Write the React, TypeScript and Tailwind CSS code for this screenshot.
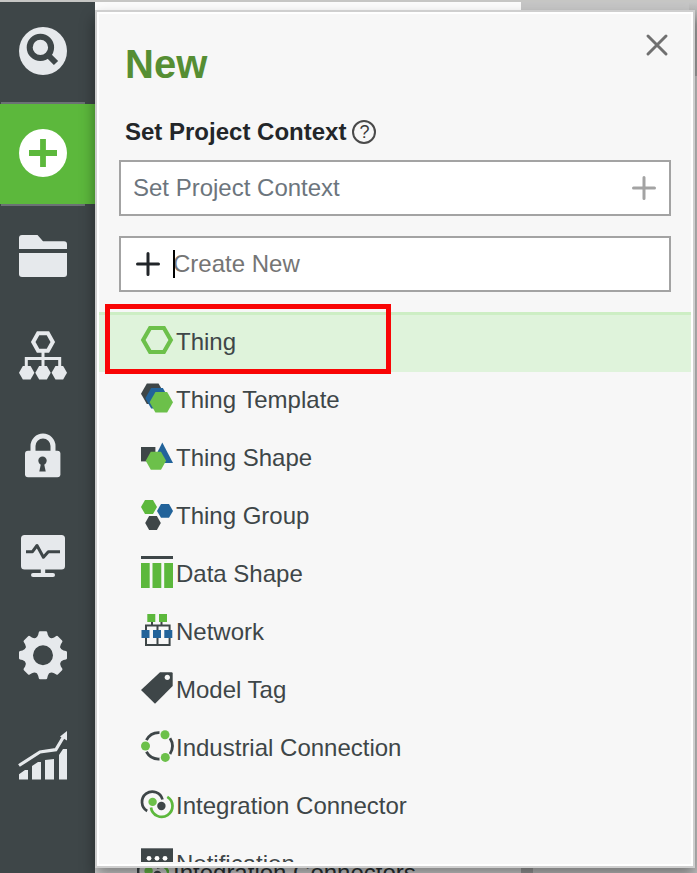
import type { ReactNode } from 'react';

const hex = (x: number, y: number, w: number, h: number) =>
  `${x + w * 0.25},${y} ${x + w * 0.75},${y} ${x + w},${y + h / 2} ${x + w * 0.75},${y + h} ${x + w * 0.25},${y + h} ${x},${y + h / 2}`;

const GREEN = '#5cb83c';
const LIME = '#6cc04a';
const BLUE = '#22639a';
const DARK = '#3e4648';

const NAV: { label: string; icon: ReactNode; active?: boolean }[] = [
  {
    label: 'Search',
    icon: (
      <g transform="translate(0 -1)">
        <circle cx="24" cy="24" r="24" />
        <circle cx="21.4" cy="20.4" r="10.7" fill="none" stroke={DARK} strokeWidth="6" />
        <path d="M28.500 27.500 37 36" stroke={DARK} strokeWidth="6" />
      </g>
    ),
  },
  {
    label: 'New',
    active: true,
    icon: (
      <g transform="translate(0 -1)">
        <circle cx="24" cy="24" r="24" fill="#fff" />
        <path d="M24 10v28M10 24h28" stroke={GREEN} strokeWidth="5.8" />
      </g>
    ),
  },
  {
    label: 'Browse',
    icon: (
      <>
        <path d="M0 17V6a3 3 0 0 1 3-3h15.5L24 9.2h21a3 3 0 0 1 3 3V17z" />
        <path d="M0 21h48v21a3 3 0 0 1-3 3H3a3 3 0 0 1-3-3z" />
      </>
    ),
  },
  {
    label: 'Relationships',
    icon: (
      <>
        <polygon points={hex(14.2, 1.2, 19.6, 17.6)} fill="none" stroke="#e6e9ec" strokeWidth="4" />
        <path d="M24 20v15M7.3 35v-8.4h33.4V35" fill="none" stroke="#e6e9ec" strokeWidth="3" />
        <polygon points={hex(0, 34, 15.4, 13.4)} />
        <polygon points={hex(16.3, 34, 15.4, 13.4)} />
        <polygon points={hex(32.6, 34, 15.4, 13.4)} />
      </>
    ),
  },
  {
    label: 'Security',
    icon: (
      <>
        <path d="M14 21v-7a10 10 0 0 1 20 0v7" fill="none" stroke="#e6e9ec" strokeWidth="5" />
        <rect x="6" y="18.7" width="35.4" height="26.6" rx="3" />
        <circle cx="23.5" cy="28.7" r="4.2" fill={DARK} />
        <path d="M22.3 30h2.4l2 9.6h-6.4z" fill={DARK} />
      </>
    ),
  },
  {
    label: 'Monitoring',
    icon: (
      <>
        <rect x="2" y="3" width="44" height="34.4" rx="3.5" />
        <path d="M21.8 37h4.4v5h-4.4z" />
        <rect x="12" y="41" width="24" height="4" rx="2" />
        <path d="M7 19.700h6.500L18 13.500l6.400 11.800 4.900-5.600H41" fill="none" stroke={DARK} strokeWidth="3" strokeLinejoin="round" />
      </>
    ),
  },
  {
    label: 'Settings',
    icon: (
      <g transform="translate(24 23.3)">
        <circle r="14" fill="none" stroke="#e6e9ec" strokeWidth="8" />
        {[0, 45, 90, 135, 180, 225, 270, 315].map((a) => (
          <path key={a} transform={`rotate(${a})`} d="M-3-24H3Q4-24 4.2-23L4.8-20.5Q5.5-18 8-16.8L5-14H-5L-8-16.8Q-5.5-18-4.8-20.5L-4.2-23Q-4-24-3-24Z" />
        ))}
      </g>
    ),
  },
  {
    label: 'Analytics',
    icon: (
      <>
        <path d="M0 42.3 6 38h3v9.5H0zM13 34l6-4h3v17.5h-9zM26 28l9-1v20.500h-9zM40 23l4-6h4v30.500h-8z" />
        <path d="M0 33.500 21 20l15.800-2.300L45 4" fill="none" stroke="#e6e9ec" strokeWidth="3.200" />
        <path d="M48-1v9.500L41 4.500z" />
      </>
    ),
  },
];

const ENTITIES: { label: string; icon: ReactNode }[] = [
  {
    label: 'Thing',
    icon: <polygon points={hex(2.2, 4, 27.6, 24)} fill="none" stroke={LIME} strokeWidth="4.200" />,
  },
  {
    label: 'Thing Template',
    icon: (
      <>
        <polygon points={hex(0, 1.4, 23.4, 20.6)} fill={DARK} />
        <polygon points={hex(4.3, 6, 23.4, 20.6)} fill={BLUE} />
        <polygon points={hex(8.6, 10, 23.4, 20.6)} fill={LIME} />
      </>
    ),
  },
  {
    label: 'Thing Shape',
    icon: (
      <>
        <path d="M0 7h14.400v14.400H0z" fill={DARK} />
        <path d="M21.300 2.600 32 23H11z" fill={BLUE} />
        <polygon points={hex(4.7, 11.8, 20.4, 18)} fill={LIME} />
      </>
    ),
  },
  {
    label: 'Thing Group',
    icon: (
      <>
        <polygon points={hex(0, 2, 16, 14)} fill={GREEN} />
        <polygon points={hex(16, 6, 16, 13.8)} fill={BLUE} />
        <polygon points={hex(4.2, 18, 15.6, 14)} fill={DARK} />
      </>
    ),
  },
  {
    label: 'Data Shape',
    icon: (
      <>
        <path d="M0 0h32v3H0z" fill={DARK} />
        <path d="M0 7h8.700v25H0zM11.500 7h8.800v25h-8.800zM23.200 7H32v25h-8.800z" fill={GREEN} />
      </>
    ),
  },
  {
    label: 'Network',
    icon: (
      <>
        <path d="M5 11.500h23.600v19.500H5zM16.500 11.500v19.500M11 8v3.500M20.500 8v3.500" fill="none" stroke={DARK} strokeWidth="2" />
        <path d="M6.300 0h8v8h-8zM18 0h8v8h-8z" fill={GREEN} />
        <path d="M.5 16h8v8h-8zM12 16h8v8h-8zM23.300 16h8v8h-8z" fill={BLUE} />
      </>
    ),
  },
  {
    label: 'Model Tag',
    icon: (
      <>
        <path d="M19 .3h11.500q1.200 0 1.200 1.200V14L14 31.700 0 18z" fill={DARK} />
        <circle cx="26.300" cy="5.300" r="2.600" fill="#f7f7f7" />
      </>
    ),
  },
  {
    label: 'Industrial Connection',
    icon: (
      <>
        <path d="M5.400 10.200A14 14 0 0 1 18.500 2.600M29 8.300A14.500 14.500 0 0 1 29 24M5.400 21.800A14 14 0 0 0 18.500 29" fill="none" stroke={DARK} strokeWidth="2.800" />
        <circle cx="24" cy="4.700" r="4.500" fill={LIME} />
        <circle cx="4.500" cy="16" r="4.500" fill={LIME} />
        <circle cx="24.300" cy="27.400" r="4.500" fill={LIME} />
      </>
    ),
  },
  {
    label: 'Integration Connector',
    icon: (
      <>
        <path d="M6.200 23A10.400 10.400 0 1 1 21.500 11.500" fill="none" stroke={DARK} strokeWidth="2.700" />
        <path d="M26.300 8.800A10.800 10.800 0 1 1 10 19.500" fill="none" stroke={GREEN} strokeWidth="2.700" />
        <circle cx="11.600" cy="13.900" r="4.200" fill={LIME} />
        <circle cx="20.400" cy="18" r="4.200" fill={DARK} />
      </>
    ),
  },
  {
    label: 'Notification',
    icon: (
      <>
        <path d="M0 2.300h32V24H0z" fill={DARK} />
        <circle cx="8" cy="12.300" r="2.400" fill="#fff" />
        <circle cx="16" cy="12.300" r="2.400" fill="#fff" />
        <circle cx="24" cy="12.300" r="2.400" fill="#fff" />
      </>
    ),
  },
];

export default function App() {
  return (
    <div className="flex h-screen flex-col overflow-hidden border-t-2 border-[#c6c6c4] bg-[#c6c6c6] font-['Liberation_Sans',Arial,sans-serif]">
      <div className="flex min-h-0 flex-1">
        <Sidebar />
        <main className="grid min-w-0 flex-1 grid-cols-1 grid-rows-1">
          <Backdrop />
          <NewPanel />
        </main>
      </div>
    </div>
  );
}

function Sidebar() {
  return (
    <nav className="w-[95px] shrink-0 bg-[#3e4648]">
      {NAV.map(({ label, icon, active }) => (
        <div key={label}>
          {active && <div className="mr-2.5 ml-px h-0.5 bg-[#6b7274]" />}
          <button
            aria-label={label}
            className={`flex h-[100px] w-full items-center justify-center pr-[9px] ${active ? 'bg-[#5cb83c]' : ''}`}
          >
            <svg viewBox="0 0 48 48" className="size-12 overflow-visible fill-[#e6e9ec]">{icon}</svg>
          </button>
          {active && <div className="mr-2.5 ml-px h-0.5 bg-[#6b7274]" />}
        </div>
      ))}
    </nav>
  );
}

// the dimmed page that shows around the edges of the open panel
function Backdrop() {
  return (
    <div className="col-start-1 row-start-1 flex min-h-0 overflow-hidden">
      <div className="flex w-[426px] shrink-0 flex-col justify-between bg-linear-to-b from-[#fcfcfc] from-50% to-[#d6d6d6] to-50%">
        <span />
        <div className="-mb-4 flex h-8 items-center gap-1 pl-[42px] text-2xl whitespace-nowrap text-[#2c3133]">
          <svg viewBox="0 0 32 32" className="size-8 shrink-0">{ENTITIES[8].icon}</svg>
          Integration Connectors
        </div>
      </div>
      <div className="flex w-3 shrink-0 flex-col justify-end">
        <div className="h-1/2 bg-[#a0a0a0]" />
      </div>
      <div className="flex flex-1 flex-col items-end">
        <div className="h-[74px] w-2 bg-linear-to-b from-[#c6c6c6] to-[#a2a2a2] to-30%" />
      </div>
    </div>
  );
}

function NewPanel() {
  return (
    <section
      aria-label="New"
      className="z-10 col-start-1 row-start-1 mt-2 mr-0.5 mb-[5px] flex min-h-0 flex-col border-2 border-[#cfcfcf] bg-[#f7f7f7] shadow-[0_8px_14px_rgba(0,0,0,0.4)]"
    >
      <div className="flex min-h-0 flex-1 flex-col border-2 border-white pb-0.5">
        <header className="flex items-start justify-between pt-5 pr-6 pl-[26px]">
          <h1 className="mt-1.5 text-[40px] leading-12 font-bold text-[#568e33]">New</h1>
          <button aria-label="Close">
            <svg viewBox="0 0 20 20" className="size-5 overflow-visible">
              <path d="M1 2l18 18M19 2 1 20" stroke="#707070" strokeWidth="3" strokeLinecap="round" />
            </svg>
          </button>
        </header>

        <div className="mt-7 flex h-8 items-center gap-1.5 pl-[26px]">
          <label htmlFor="context" className="text-2xl font-bold text-[#232629]">Set Project Context</label>
          <button aria-label="Help" className="flex size-6 items-center justify-center rounded-full border-2 border-[#4a4a4a] text-lg leading-5 text-[#3a3a3a]">?</button>
        </div>

        <div className="mx-5 mt-3 flex h-14 items-center border-2 border-[#a3a3a3] bg-white pr-[13px] pl-3">
          <input id="context" placeholder="Set Project Context" className="min-w-0 flex-1 text-2xl outline-none placeholder:text-[#6c757d]" />
          <button aria-label="Add project context"><PlusIcon className="stroke-[#a3a3a3]" /></button>
        </div>

        <div className="mx-5 mt-5 flex h-14 items-center border-2 border-[#a3a3a3] bg-white pr-3 pl-[15px]">
          <PlusIcon className="stroke-[#212529]" />
          <span className="z-10 ml-[13px] h-7 w-0.5 bg-black" />
          <input aria-label="Create New" placeholder="Create New" className="-ml-0.5 min-w-0 flex-1 text-2xl outline-none placeholder:text-[#757575]" />
        </div>

        <EntityList />
      </div>
    </section>
  );
}

function EntityList() {
  return (
    <div className="mt-5 flex min-h-0 flex-1 flex-col">
      <div className="relative -mb-px shrink-0">
        <EntityRow index={0} className="h-[60px] bg-[#dff3db] shadow-[inset_0_3px_0_#cdeec4]" />
        <div className="pointer-events-none absolute -top-2 left-1.5 h-[70px] w-[286px] border-5 border-[#f90505]" />
      </div>
      <ul className="min-h-0 flex-1 overflow-hidden">
        {ENTITIES.slice(1).map((e, i) => (
          <li key={e.label}><EntityRow index={i + 1} className="h-[58px]" /></li>
        ))}
      </ul>
    </div>
  );
}

function EntityRow({ index, className }: { index: number; className: string }) {
  const { label, icon } = ENTITIES[index];
  return (
    <button className={`flex w-full items-center gap-[3px] pl-[42px] text-left text-2xl text-[#3e4648] ${className}`}>
      <svg viewBox="0 0 32 32" className="mb-1 size-8 shrink-0 overflow-visible">{icon}</svg>
      {label}
    </button>
  );
}

function PlusIcon({ className }: { className: string }) {
  return (
    <svg viewBox="0 0 24 24" className={`size-6 shrink-0 ${className}`}>
      <path d="M12 1.500v21M1.500 12h21" strokeWidth="3" strokeLinecap="round" />
    </svg>
  );
}
